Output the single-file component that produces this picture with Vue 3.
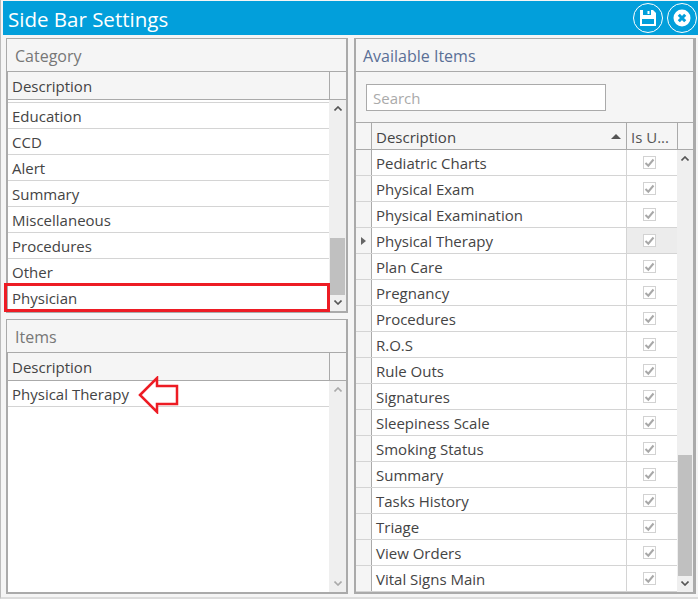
<script setup>
const categories = ['Education', 'CCD', 'Alert', 'Summary', 'Miscellaneous', 'Procedures', 'Other', 'Physician']
const available = [
  'Pediatric Charts', 'Physical Exam', 'Physical Examination', 'Physical Therapy', 'Plan Care',
  'Pregnancy', 'Procedures', 'R.O.S', 'Rule Outs', 'Signatures', 'Sleepiness Scale',
  'Smoking Status', 'Summary', 'Tasks History', 'Triage', 'View Orders', 'Vital Signs Main'
]
</script>

<template>
  <div class="window">
    <header class="titlebar">
      <span class="title">Side Bar Settings</span>
      <button class="round-btn" aria-label="Save">
        <svg width="16" height="16" viewBox="0 0 16 16">
          <path fill="#fff" d="M0 0h13l3 3v13H0z" />
          <path fill="#029fdb" d="M3 0h8v5H3zM2 9h12v5H2z" />
          <path fill="#fff" d="M7.500 1h2v3h-2z" />
        </svg>
      </button>
      <button class="round-btn" aria-label="Close">
        <svg width="18" height="18" viewBox="0 0 18 18">
          <circle cx="9" cy="9" r="8.500" fill="#fff" />
          <path d="M5.800 5.800l6.400 6.400M12.200 5.800l-6.400 6.400" stroke="#029fdb" stroke-width="3" />
        </svg>
      </button>
    </header>

    <main class="content">
      <div class="left">
        <section class="panel category">
          <h2 class="panel-title">Category</h2>
          <div class="grid">
            <div class="grid-head">
              <div class="head-cell grow">Description</div>
              <div class="head-cell corner"></div>
            </div>
            <div class="grid-body">
              <div class="rows">
                <div class="row stub"></div>
                <div v-for="c in categories" :key="c" class="row"><span class="cell">{{ c }}</span></div>
              </div>
              <div class="scrollbar">
                <svg class="arrow" width="8" height="5" viewBox="0 0 8 5"><path d="M.5 4.500L4 1l3.500 3.500" fill="none" stroke="#555" stroke-width="1.600" /></svg>
                <div class="track cat-track"><div class="thumb"></div></div>
                <svg class="arrow" width="8" height="5" viewBox="0 0 8 5"><path d="M.5.500L4 4 7.500.500" fill="none" stroke="#555" stroke-width="1.600" /></svg>
              </div>
            </div>
          </div>
          <div class="highlight"></div>
        </section>

        <section class="panel items">
          <h2 class="panel-title">Items</h2>
          <div class="grid">
            <div class="grid-head">
              <div class="head-cell grow">Description</div>
              <div class="head-cell corner"></div>
            </div>
            <div class="grid-body">
              <div class="rows">
                <div class="row"><span class="cell">Physical Therapy</span></div>
              </div>
              <div class="scrollbar">
                <svg class="arrow" width="8" height="5" viewBox="0 0 8 5"><path d="M.5 4.500L4 1l3.500 3.500" fill="none" stroke="#aaa" stroke-width="1.600" /></svg>
                <div class="track"></div>
                <svg class="arrow" width="8" height="5" viewBox="0 0 8 5"><path d="M.5.500L4 4 7.500.500" fill="none" stroke="#aaa" stroke-width="1.600" /></svg>
              </div>
            </div>
          </div>
          <svg class="callout" width="44" height="38" viewBox="0 0 44 38">
            <path d="M3 19L20 2v8h20v18H20v8z" fill="#fff" stroke="#ed1c24" stroke-width="2.500" />
          </svg>
        </section>
      </div>

      <section class="panel available">
        <h2 class="panel-title blue">Available Items</h2>
        <div class="search-area">
          <input class="search" placeholder="Search" />
        </div>
        <div class="grid">
          <div class="grid-head">
            <div class="head-cell indicator"></div>
            <div class="head-cell grow sort">
              Description
              <svg width="10" height="5" viewBox="0 0 10 5"><path d="M0 5l5-5 5 5z" fill="#555" /></svg>
            </div>
            <div class="head-cell used">Is U...</div>
            <div class="head-cell corner"></div>
          </div>
          <div class="grid-body">
            <div class="rows">
              <div v-for="(a, i) in available" :key="a" class="row">
                <div class="indicator-cell">
                  <svg v-if="i === 3" width="5" height="8" viewBox="0 0 5 8"><path d="M0 0l5 4-5 4z" fill="#666" /></svg>
                </div>
                <span class="cell grow">{{ a }}</span>
                <div class="check-cell" :class="{ current: i === 3 }">
                  <svg width="13" height="13" viewBox="0 0 13 13">
                    <rect x="0.500" y="0.500" width="12" height="12" fill="#fff" stroke="#d2d2d2" />
                    <path d="M2.500 7l2.800 2.700L10.500 3.500" fill="none" stroke="#a8a8a8" stroke-width="2" />
                  </svg>
                </div>
              </div>
            </div>
            <div class="scrollbar">
              <svg class="arrow" width="8" height="5" viewBox="0 0 8 5"><path d="M.5 4.500L4 1l3.500 3.500" fill="none" stroke="#555" stroke-width="1.600" /></svg>
              <div class="track avail-track"><div class="thumb"></div></div>
              <svg class="arrow" width="8" height="5" viewBox="0 0 8 5"><path d="M.5.500L4 4 7.500.500" fill="none" stroke="#555" stroke-width="1.600" /></svg>
            </div>
          </div>
        </div>
      </section>
    </main>
  </div>
</template>

<style>
html, body { margin: 0; background: #f5f5f5; }
</style>

<style scoped>
.window {
  width: 698px;
  height: 599px;
  box-sizing: border-box;
  padding-top: 1px;
  background: #f5f5f5;
  border-left: 1px solid #bbb;
  border-bottom: 2px solid #dcdcdc;
  font-family: "Open Sans", "Noto Sans", sans-serif;
  color: #444;
  display: flex;
  flex-direction: column;
  overflow: hidden;
}
.titlebar {
  height: 34px;
  flex: none;
  margin-left: 2px;
  background: #029fdb;
  display: flex;
  align-items: center;
  gap: 4px;
  padding: 0 1px 0 5px;
}
.title {
  flex: 1;
  color: #fff;
  font-size: 20.500px;
  padding-top: 2px;
}
.round-btn {
  width: 30px;
  height: 30px;
  padding: 0;
  border: 1.500px solid #fff;
  border-radius: 50%;
  background: transparent;
  display: flex;
  align-items: center;
  justify-content: center;
}
.content {
  flex: 1;
  min-height: 0;
  display: flex;
  gap: 6px;
  padding: 3px 2px 3px 5px;
}
.left {
  width: 342px;
  flex: none;
  display: flex;
  flex-direction: column;
  gap: 6px;
}
.panel {
  position: relative;
  box-sizing: border-box;
  background: #f5f5f5;
  border: 1px solid #aaa;
  border-right-width: 2px;
  border-bottom-width: 2px;
  display: flex;
  flex-direction: column;
  min-height: 0;
}
.category { height: 275px; flex: none; }
.items { flex: 1; }
.available { flex: 1; border-left-width: 2px; border-right-width: 3px; }
.panel-title {
  margin: 0;
  height: 33px;
  flex: none;
  box-sizing: border-box;
  padding: 5px 0 0 8px;
  font-size: 16px;
  line-height: 24px;
  font-weight: 400;
  color: #777;
  border-bottom: 1px solid #aaa;
}
.blue { color: #5a6f96; padding-left: 7px; }
.grid {
  flex: 1;
  min-height: 0;
  display: flex;
  flex-direction: column;
}
.left .grid { border-left: 1px solid #aaa; }
.grid-head {
  height: 28px;
  flex: none;
  box-sizing: border-box;
  display: flex;
  border-bottom: 1px solid #aaa;
  background: #f5f5f5;
}
.available .grid-head { height: 27px; }
.head-cell {
  box-sizing: border-box;
  height: 100%;
  font-size: 15px;
  line-height: 28px;
  padding-left: 4px;
}
.grow { flex: 1; min-width: 0; }
.corner {
  width: 17px;
  flex: none;
  border-left: 1px solid #aaa;
}
.available .corner { width: 16px; }
.indicator {
  width: 16px;
  flex: none;
  border-right: 1px solid #aaa;
}
.sort {
  display: flex;
  align-items: center;
  justify-content: space-between;
  padding-top: 1px;
  padding-right: 5px;
}
.used {
  width: 51px;
  flex: none;
  border-left: 1px solid #aaa;
  color: #555;
}
.grid-body {
  flex: 1;
  min-height: 0;
  display: flex;
  background: #fff;
}
.rows {
  flex: 1;
  min-width: 0;
  overflow: hidden;
}
.row {
  height: 26px;
  box-sizing: border-box;
  display: flex;
  align-items: center;
  border-bottom: 1px solid #d4d4d4;
  font-size: 15px;
}
.row.stub { height: 3px; }
.cell {
  padding-left: 4px;
  white-space: nowrap;
}
.indicator-cell {
  width: 16px;
  height: 100%;
  flex: none;
  box-sizing: border-box;
  background: #f5f5f5;
  border-right: 1px solid #aaa;
  display: flex;
  align-items: center;
  justify-content: center;
}
.check-cell {
  width: 51px;
  height: 100%;
  flex: none;
  box-sizing: border-box;
  border-left: 1px solid #d4d4d4;
  padding-left: 16px;
  display: flex;
  align-items: center;
}
.check-cell.current { background: #ececec; }
.scrollbar {
  width: 17px;
  flex: none;
  background: #efefef;
  display: flex;
  flex-direction: column;
  align-items: center;
  padding: 6px 0;
  box-sizing: border-box;
}
.available .scrollbar { width: 16px; }
.arrow { flex: none; }
.track {
  flex: 1;
  width: 100%;
  display: flex;
  flex-direction: column;
  justify-content: flex-end;
  padding-bottom: 5px;
  box-sizing: border-box;
}
.thumb {
  background: #c0c0c0;
  margin: 0 1px;
}
.cat-track .thumb { height: 57px; }
.avail-track .thumb { height: 121px; }
.highlight {
  position: absolute;
  left: -3px;
  right: 16px;
  bottom: -1px;
  height: 29px;
  box-sizing: border-box;
  border: 3px solid #ed1c24;
}
.callout {
  position: absolute;
  left: 130px;
  top: 56px;
}
.search-area {
  height: 51px;
  flex: none;
  box-sizing: border-box;
  padding: 12px 0 0 10px;
  border-bottom: 1px solid #aaa;
}
.search {
  display: block;
  width: 240px;
  height: 27px;
  box-sizing: border-box;
  border: 1px solid #aaa;
  background: #fff;
  padding: 0 6px;
  font: 15px "Open Sans", "Noto Sans", sans-serif;
  outline: none;
}
.search::placeholder { color: #aaa; opacity: 1; }
</style>
